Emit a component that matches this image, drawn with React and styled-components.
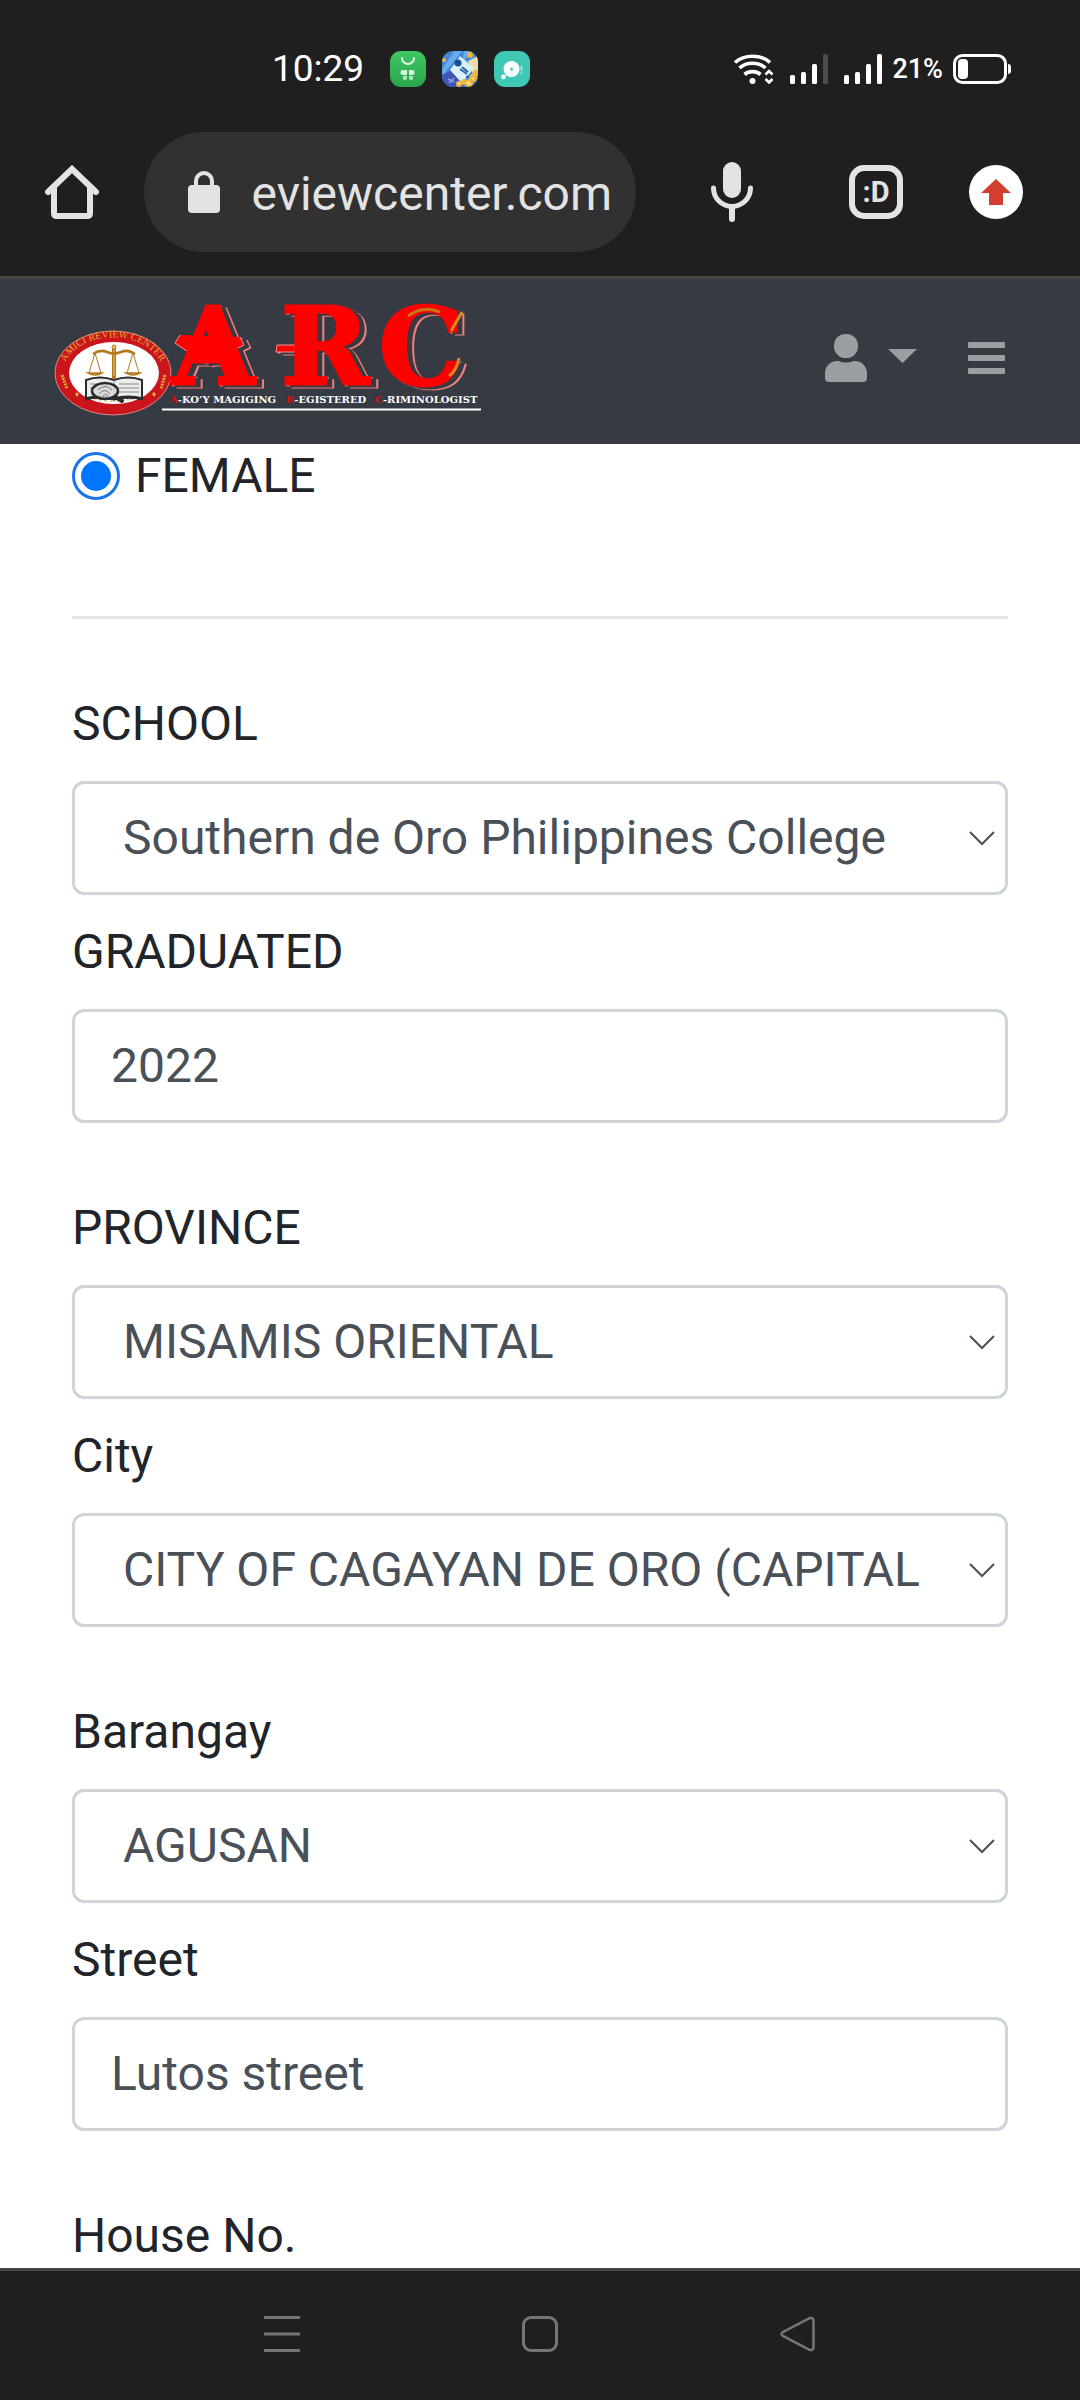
import React from "react";
import styled, { createGlobalStyle } from "styled-components";

const GlobalStyle = createGlobalStyle`
  *, *::before, *::after { box-sizing: border-box; }
  body {
    margin: 0;
    background: #fff;
    color: #212529;
    font-family: Roboto, "Liberation Sans", sans-serif;
    font-size: 48px;
  }
  button, input, select { font: inherit; color: inherit; }
`;

const Screen = styled.div`
  display: flex;
  flex-direction: column;
  height: 100vh;
  overflow: hidden;
`;

const BrowserChrome = styled.header`
  flex: none;
  background: #1f1f1f;
  border-bottom: 3px solid #444746;
`;

const StatusBar = styled.div`
  display: flex;
  align-items: center;
  justify-content: space-between;
  height: 132px;
  padding: 6px 69px 0 272px;
  color: #fff;
`;

const StatusGroup = styled.div`
  display: flex;
  align-items: center;
  gap: ${(p) => p.$gap}px;
`;

const Clock = styled.time`
  margin-right: 10px;
  font-size: 37px;
  line-height: 40px;
`;

const BatteryLevel = styled.span`
  margin: 0 -6px;
  font-size: 27px;
  font-weight: 500;
  line-height: 32px;
`;

const Toolbar = styled.div`
  display: flex;
  align-items: center;
  padding: 0 57px 24px 45px;
  color: #e3e3e3;
`;

const IconButton = styled.button`
  display: flex;
  align-items: center;
  justify-content: center;
  flex: none;
  gap: 21px;
  margin: 0 0 0 ${(p) => p.$before || 0}px;
  padding: 0;
  border: 0;
  background: none;
  color: inherit;
`;

const AddressBar = styled.label`
  display: flex;
  align-items: center;
  flex: 1;
  gap: 32px;
  min-width: 0;
  height: 120px;
  margin-left: 45px;
  padding: 0 24px 0 44px;
  border-radius: 60px;
  background: #313131;
`;

const AddressInput = styled.input`
  flex: 1;
  min-width: 0;
  padding: 4px 0 0;
  border: 0;
  outline: 0;
  background: none;
  direction: rtl;
  line-height: 72px;
`;

const TabCount = styled.button`
  flex: none;
  width: 54px;
  height: 54px;
  margin: 0 0 0 90px;
  padding: 0;
  border: 6px solid #e3e3e3;
  border-radius: 15px;
  background: none;
  font-size: 29px;
  font-weight: 700;
  line-height: 40px;
`;

const SiteNav = styled.nav`
  display: flex;
  align-items: center;
  flex: none;
  height: 165px;
  padding: 0 75px 8px 48px;
  background: #363a42;
  color: #9b9fa2;
`;

const BrandLink = styled.a`
  display: flex;
  margin-right: auto;
`;

const ArcLetters = styled.text`
  font-family: "DejaVu Serif", "Liberation Serif", serif;
  font-size: 106px;
  font-weight: 700;
`;

const Page = styled.main`
  flex: 1;
  min-height: 0;
  padding: 8px 72px 0;
  overflow: hidden;
`;

const RadioRow = styled.label`
  display: flex;
  align-items: center;
  gap: 15px;
  line-height: 48px;
`;

const Radio = styled.input`
  appearance: none;
  width: 48px;
  height: 48px;
  margin: 0;
  padding: 6px;
  border: 3px solid #1a73e8;
  border-radius: 50%;

  &:checked {
    background: #0075ff content-box;
  }
`;

const Divider = styled.hr`
  height: 3px;
  margin: 116px 0 0;
  border: 0;
  background: #e5e5e5;
`;

const FieldGroup = styled.section`
  padding-top: 48px;
`;

const Field = styled.div`
  display: flex;
  flex-direction: column;
  gap: 21px;
  padding-top: 21px;
`;

const FieldLabel = styled.label`
  line-height: 72px;
`;

const TextBox = styled.input`
  width: 100%;
  height: 114px;
  padding: 0 36px 2px;
  border: 3px solid #ced4da;
  border-radius: 12px;
  background: #fff;
  color: #495057;
`;

const SelectWrap = styled.div`
  display: grid;
  align-items: center;

  > * { grid-area: 1 / 1; }
  > svg {
    justify-self: end;
    margin-right: 12px;
    pointer-events: none;
  }
`;

const SelectBox = styled.select`
  appearance: none;
  width: 100%;
  height: 114px;
  padding: 0 60px 2px 48px;
  border: 3px solid #ced4da;
  border-radius: 12px;
  background: #fff;
  color: #495057;
`;

const SystemNav = styled.nav`
  display: flex;
  align-items: center;
  justify-content: center;
  flex: none;
  gap: 222px;
  height: 132px;
  padding-bottom: 3px;
  border-top: 3px solid #444746;
  background: #1f1f1f;
  color: #757575;
`;

function BagIcon() {
  return (
    <svg width="36" height="36" viewBox="0 0 36 36" aria-hidden="true">
      <defs>
        <linearGradient id="bag" x1="0" y1="0" x2="0" y2="1">
          <stop offset="0" stopColor="#3fc765" />
          <stop offset="1" stopColor="#2ba44c" />
        </linearGradient>
      </defs>
      <rect width="36" height="36" rx="11" fill="url(#bag)" />
      <path d="M12 7a6 6 0 0 0 12 0" fill="none" stroke="#d9f7df" strokeWidth="2" strokeLinecap="round" />
      <g fill="#d9f7df">
        <path d="M13 19h4v5h-4a2.500 2.500 0 0 1 0-5zM19 19h3a2.500 2.500 0 0 1 0 5h-3z" />
        <path d="M13 25h4v3a2.300 2.300 0 0 1-4 0zM19 25h4v3a2.300 2.300 0 0 1-4 0z" opacity=".75" />
      </g>
    </svg>
  );
}

function GameIcon() {
  return (
    <svg width="36" height="36" viewBox="0 0 36 36" aria-hidden="true">
      <defs>
        <clipPath id="game">
          <rect width="36" height="36" rx="11" />
        </clipPath>
      </defs>
      <g clipPath="url(#game)">
        <rect width="36" height="36" fill="#3f86d8" />
        <path d="M0 18L12 0h8L0 26zM22 0h9L20 12z" fill="#69a8ea" />
        <path d="M0 24l10-5 12 17H0z" fill="#4257b5" />
        <path d="M26 10l10-5v14l-5 5z" fill="#e9dca6" />
        <path d="M18 5l14 12-12 15L8 19z" fill="#d8f1fb" />
        <circle cx="16" cy="12" r="3.500" fill="#1c4d91" />
        <path d="M18 18l7 5M20 16l6 5M24 26l5-1" stroke="#2c65a8" strokeWidth="2" />
        <path d="M6 28l6 3m0-4l-5 5" stroke="#8da1ea" strokeWidth="1.500" />
        <g fill="#efb43f">
          <circle cx="2" cy="9" r="2" />
          <circle cx="28" cy="4" r="3" />
          <circle cx="17" cy="33" r="3" />
          <circle cx="22" cy="31" r="3" />
          <circle cx="27" cy="32" r="4" />
          <circle cx="31" cy="27" r="4" />
          <circle cx="34" cy="22" r="3" />
        </g>
        <path d="M16 33l2-1m6 0l3-1m3-3l2-1m-6 6l3 0" stroke="#fde8a0" strokeWidth="1.500" />
      </g>
    </svg>
  );
}

function CameraIcon() {
  return (
    <svg width="36" height="36" viewBox="0 0 36 36" aria-hidden="true">
      <rect width="36" height="36" rx="11" fill="#3fc8b6" />
      <circle cx="17.500" cy="18" r="5" fill="none" stroke="#fff" strokeWidth="6" />
      <circle cx="17.500" cy="18" r="2.500" fill="#fff" />
      <circle cx="17.500" cy="18" r="1.500" fill="#3fc8b6" />
      <circle cx="9.500" cy="26" r="2.400" fill="#fff" />
      <path d="M27.500 15v5M27.500 21.500v1.500" stroke="#b9efe8" strokeWidth="1.500" />
    </svg>
  );
}

function WifiIcon() {
  return (
    <svg width="40" height="30" viewBox="0 0 40 30" fill="none" stroke="currentColor" aria-hidden="true">
      <path d="M1 8.500C10 .1 27 .1 36 8.500" strokeWidth="3.600" />
      <path d="M5.500 14C12.500 7.700 24.500 7.700 31.500 14" strokeWidth="3.600" />
      <path d="M10.500 20.500C15 16.700 22 16.700 26.500 20.500" strokeWidth="3.600" />
      <circle cx="18.500" cy="27" r="3" fill="currentColor" stroke="none" />
      <path d="M31.500 20.500l3.500-3.500 3.500 3.500M31.500 25l3.500 3.500 3.500-3.500" strokeWidth="2.600" />
    </svg>
  );
}

const BARS = [9, 12, 20, 30];

function SignalIcon({ level }) {
  return (
    <svg width="38" height="30" viewBox="0 0 38 30" fill="currentColor" aria-hidden="true">
      {BARS.map((h, i) => (
        <rect key={h} x={i * 11} y={30 - h} width="5" height={h} rx="1.500" opacity={i < level ? 1 : 0.2} />
      ))}
    </svg>
  );
}

function BatteryIcon() {
  return (
    <svg width="58" height="30" viewBox="0 0 58 30" fill="currentColor" aria-hidden="true">
      <rect x="1.500" y="1.500" width="51" height="27" rx="8" fill="none" stroke="currentColor" strokeWidth="3" />
      <rect x="5" y="5" width="10" height="20" rx="4" />
      <path d="M55 10c2 0 3 1 3 3v4c0 2-1 3-3 3z" />
    </svg>
  );
}

function HomeIcon() {
  return (
    <svg width="54" height="54" viewBox="0 0 54 54" fill="none" stroke="currentColor" strokeWidth="6" aria-hidden="true">
      <path d="M3 27L27 4l24 23" strokeLinecap="round" />
      <path d="M9 23v25q0 3 3 3h30q3 0 3-3V23" />
    </svg>
  );
}

function LockIcon() {
  return (
    <svg width="32" height="42" viewBox="0 0 32 42" aria-hidden="true">
      <path d="M8 16V10a8 8 0 0 1 16 0v6" fill="none" stroke="#e3e3e3" strokeWidth="4" />
      <rect y="14" width="32" height="28" rx="4" fill="#e3e3e3" />
    </svg>
  );
}

function MicIcon() {
  return (
    <svg width="54" height="60" viewBox="0 0 54 60" aria-hidden="true">
      <rect x="18" width="18" height="36" rx="9" fill="currentColor" />
      <path d="M8.500 26a18.500 18.500 0 0 0 37 0" fill="none" stroke="currentColor" strokeWidth="5" strokeLinecap="round" />
      <path d="M27 46v11" stroke="currentColor" strokeWidth="6" strokeLinecap="round" />
    </svg>
  );
}

function UpdateIcon() {
  return (
    <svg width="54" height="54" viewBox="0 0 54 54" aria-hidden="true">
      <circle cx="27" cy="27" r="27" fill="#fff" />
      <path d="M27 14l15 14h-8v12H20V28h-8z" fill="#d23f31" />
    </svg>
  );
}

function UserIcon() {
  return (
    <svg width="42" height="48" viewBox="0 0 42 48" fill="currentColor" aria-hidden="true">
      <rect x="9" width="24" height="24" rx="11.500" />
      <path d="M14 27c4 2 10 2 14 0c8-1 14 5 14 12v5q0 4-4 4H4q-4 0-4-4v-5C0 32 6 26 14 27z" />
    </svg>
  );
}

function CaretIcon() {
  return (
    <svg width="29" height="18" viewBox="0 0 29 18" fill="currentColor" aria-hidden="true">
      <path d="M0 0h29L14.500 14z" />
    </svg>
  );
}

function BarsIcon() {
  return (
    <svg width="37" height="32" viewBox="0 0 37 32" fill="currentColor" aria-hidden="true">
      <rect width="37" height="6" rx="1" />
      <rect y="13" width="37" height="6" rx="1" />
      <rect y="26" width="37" height="6" rx="1" />
    </svg>
  );
}

function Chevron() {
  return (
    <svg width="28" height="18" viewBox="0 0 28 18" aria-hidden="true">
      <path d="M2 3l12 12L26 3" fill="none" stroke="#495057" strokeWidth="2" />
    </svg>
  );
}

const Brand = styled.svg`
  .letters {
    filter: drop-shadow(5px 2px 0 #363a42) drop-shadow(2px 1px 0 #f07f80);
  }
`;

function Logo() {
  return (
    <Brand width="440" height="120" viewBox="48 297 440 120" role="img" aria-label="ARC">
      <defs>
        <path id="sealTop" d="M68 388A50 36 0 1 1 158 388" />
        <path id="sealBottom" d="M66 377A50 35 0 0 0 161 377" />
      </defs>
      <ellipse cx="113" cy="372" rx="58" ry="42" fill="#c9151b" stroke="#d98a84" />
      <ellipse cx="114" cy="372" rx="45" ry="31" fill="#fff" />
      <g fill="#e2a93c" fontFamily="'Liberation Serif', serif" fontSize="10">
        <text textAnchor="middle">
          <textPath href="#sealTop" startOffset="50%">AMICI REVIEW CENTER</textPath>
        </text>
        <text textAnchor="middle">
          <textPath href="#sealBottom" startOffset="50%">OFFICIAL</textPath>
        </text>
        <path d="M75 393l2 3 2-3-2-2zM152 393l2 3 2-3-2-2z" />
      </g>
      <path d="M62 374l5 14M165 374l-4 14" stroke="#e2a93c" strokeWidth="3" strokeDasharray="2 1" />

      <g fill="none" stroke="#292b2e">
        <path d="M86 379q14-5 28 0q14-5 28 0v19q-14-3-28 0q-14-3-28 0z" fill="#eceeed" strokeWidth="2" />
        <path d="M85 398q14-4 29 0q14-4 29 0" strokeWidth="3" />
        <path d="M114 379v19M90 383h18M90 387h10M119 383h20M119 387h20M119 391h20" stroke="#858889" />
        <ellipse cx="105" cy="390" rx="13" ry="8" fill="#d5d7d8" fillOpacity=".8" strokeWidth="2.500" />
        <path d="M98 389q7-7 14 0M99 393q6-7 11 0M103 395q3-4 5 0" stroke="#777" />
        <path d="M115 396l7 4" strokeWidth="4" strokeLinecap="round" />
      </g>
      <g fill="none" stroke="#b57a1e">
        <path d="M114 345v33" strokeWidth="4" />
        <path d="M114 347v28" stroke="#f0c663" />
        <path d="M93 353q7-5 14-2t14 0q7-3 14 2" strokeWidth="2.500" />
        <path d="M95 352l-6 20M95 352l6 20M133 352l-6 20M133 352l6 20" strokeWidth="1" />
        <path d="M88 372h14q-7 4-14 0zM126 372h14q-7 4-14 0z" fill="#dda53b" strokeWidth="1.500" />
        <circle cx="114" cy="346" r="2" fill="#efc662" />
      </g>

      <g className="letters">
        <path d="M180 334l-5 8 31 21 38-19-4-8" fill="#fe0000" stroke="#ff8e8e" strokeWidth="1" />
        <path d="M277 344h18v7h-19z" fill="#fe0000" stroke="#ff8e8e" strokeWidth="1" />
        <ArcLetters x="172 281 379" y="383" fill="#fe0000" stroke="#fe0000" strokeWidth="3">
          ARC
        </ArcLetters>
      </g>
      <path d="M462 311l-11 19M459 357q-2 12-10 18" fill="none" stroke="#d98b20" strokeWidth="3" />
      <path d="M408 315q16-11 32-4" fill="none" stroke="#c9780f" strokeWidth="3" />

      <text y="402" fontFamily="'DejaVu Serif', serif" fontWeight="700" fontSize="10" fill="#fff">
        <tspan x="170" fill="#d90b0b">A</tspan>-KO’Y MAGIGING
        <tspan x="286" fill="#d90b0b">R</tspan>-EGISTERED
        <tspan x="375" fill="#d90b0b">C</tspan>-RIMINOLOGIST
      </text>
      <path d="M162 408.500h319" stroke="#fff" strokeWidth="2" />
    </Brand>
  );
}

function RecentsIcon() {
  return (
    <svg width="36" height="36" viewBox="0 0 36 36" fill="currentColor" aria-hidden="true">
      <path d="M0 0h36v3H0zM0 16.500h36v3H0zM0 33h36v3H0z" />
    </svg>
  );
}

function SquareIcon() {
  return (
    <svg width="36" height="36" viewBox="0 0 36 36" fill="none" stroke="currentColor" strokeWidth="3" aria-hidden="true">
      <rect x="1.500" y="1.500" width="33" height="33" rx="7.500" />
    </svg>
  );
}

function BackIcon() {
  return (
    <svg width="36" height="36" viewBox="0 0 36 36" fill="none" stroke="currentColor" strokeWidth="2.500" strokeLinejoin="round" aria-hidden="true">
      <path d="M29.500 2.200L2.800 16.200Q0 18 2.800 19.800L29.500 33.800Q33.500 35 33.500 31V5Q33.500 1 29.500 2.200z" />
    </svg>
  );
}

const GROUPS = [
  [
    { id: "school", label: "SCHOOL", value: "Southern de Oro Philippines College", select: true },
    { id: "graduated", label: "GRADUATED", value: "2022" },
  ],
  [
    { id: "province", label: "PROVINCE", value: "MISAMIS ORIENTAL", select: true },
    { id: "city", label: "City", value: "CITY OF CAGAYAN DE ORO (CAPITAL", select: true },
  ],
  [
    { id: "barangay", label: "Barangay", value: "AGUSAN", select: true },
    { id: "street", label: "Street", value: "Lutos street" },
  ],
];

function FormField({ id, label, value, select }) {
  return (
    <Field>
      <FieldLabel htmlFor={id}>{label}</FieldLabel>
      {select ? (
        <SelectWrap>
          <SelectBox id={id} defaultValue={value}>
            <option>{value}</option>
          </SelectBox>
          <Chevron />
        </SelectWrap>
      ) : (
        <TextBox id={id} type="text" defaultValue={value} />
      )}
    </Field>
  );
}

export default function App() {
  return (
    <Screen>
      <GlobalStyle />
      <BrowserChrome>
        <StatusBar>
          <StatusGroup $gap={16}>
            <Clock>10:29</Clock>
            <BagIcon />
            <GameIcon />
            <CameraIcon />
          </StatusGroup>
          <StatusGroup $gap={16}>
            <WifiIcon />
            <SignalIcon level={3} />
            <SignalIcon level={4} />
            <BatteryLevel>21%</BatteryLevel>
            <BatteryIcon />
          </StatusGroup>
        </StatusBar>
        <Toolbar>
          <IconButton aria-label="Home"><HomeIcon /></IconButton>
          <AddressBar>
            <LockIcon />
            <AddressInput type="text" aria-label="Address" defaultValue="reviewcenter.com" />
          </AddressBar>
          <IconButton aria-label="Voice search" $before={69}><MicIcon /></IconButton>
          <TabCount aria-label="Tabs">:D</TabCount>
          <IconButton aria-label="Update" $before={66}><UpdateIcon /></IconButton>
        </Toolbar>
      </BrowserChrome>

      <SiteNav>
        <BrandLink href="#"><Logo /></BrandLink>
        <IconButton aria-label="Account">
          <UserIcon />
          <CaretIcon />
        </IconButton>
        <IconButton aria-label="Menu" $before={51}><BarsIcon /></IconButton>
      </SiteNav>

      <Page>
        <RadioRow>
          <Radio type="radio" name="sex" defaultChecked />
          FEMALE
        </RadioRow>
        <Divider />
        {GROUPS.map((fields) => (
          <FieldGroup key={fields[0].id}>
            {fields.map((field) => (
              <FormField key={field.id} {...field} />
            ))}
          </FieldGroup>
        ))}
        <FieldGroup>
          <Field>
            <FieldLabel htmlFor="house">House No.</FieldLabel>
            <TextBox id="house" type="text" />
          </Field>
        </FieldGroup>
      </Page>

      <SystemNav>
        <IconButton aria-label="Recent apps"><RecentsIcon /></IconButton>
        <IconButton aria-label="Home screen"><SquareIcon /></IconButton>
        <IconButton aria-label="Back"><BackIcon /></IconButton>
      </SystemNav>
    </Screen>
  );
}
